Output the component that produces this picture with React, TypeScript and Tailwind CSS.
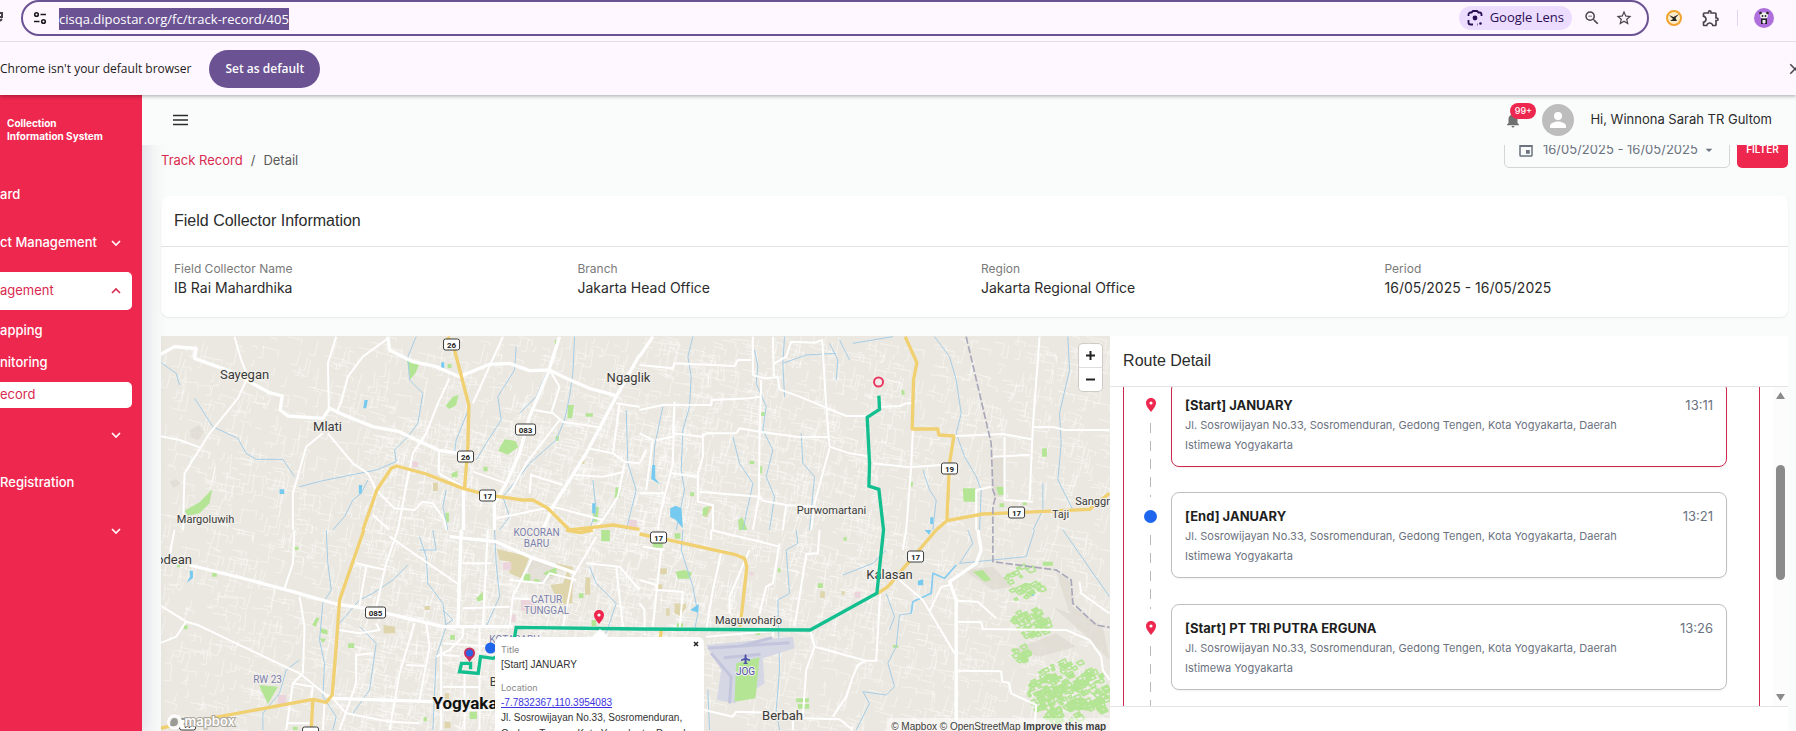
import { useState } from "react";
import {
  MdArrowDropDown,
  MdClose,
  MdEvent,
  MdNotifications,
  MdOutlineExtension,
  MdStarBorder,
  MdZoomOut,
} from "react-icons/md";

interface Stop {
  kind: "start" | "end";
  name: string;
  time: string;
  active?: boolean;
}

const ADDRESS =
  "Jl. Sosrowijayan No.33, Sosromenduran, Gedong Tengen, Kota Yogyakarta, Daerah Istimewa Yogyakarta";

const stops: Stop[] = [
  { kind: "start", name: "[Start] JANUARY", time: "13:11", active: true },
  { kind: "end", name: "[End] JANUARY", time: "13:21" },
  { kind: "start", name: "[Start] PT TRI PUTRA ERGUNA", time: "13:26" },
];

const info = [
  { label: "Field Collector Name", value: "IB Rai Mahardhika" },
  { label: "Branch", value: "Jakarta Head Office" },
  { label: "Region", value: "Jakarta Regional Office" },
  { label: "Period", value: "16/05/2025 - 16/05/2025" },
];

/* ---------- map data ---------- */

// Small seeded generator so the side streets are the same on every render
function createRandom(seed: number) {
  let s = seed;
  return () => {
    s = (s * 1664525 + 1013904223) % 4294967296;
    return s / 4294967296;
  };
}

function buildStreets(count: number, x: number, y: number, w: number, h: number, seed: number) {
  const rnd = createRandom(seed);
  let d = "";
  for (let i = 0; i < count; i++) {
    const px = x + rnd() * w;
    const py = y + rnd() * h;
    const len = 12 + rnd() * 50;
    const a = 0.2 + (rnd() > 0.5 ? Math.PI / 2 : 0) + (rnd() - 0.5) * 0.25;
    const dx = Math.cos(a) * len;
    const dy = Math.sin(a) * len;
    d += `M${px.toFixed(0)} ${py.toFixed(0)}l${dx.toFixed(0)} ${dy.toFixed(0)}l${(-dy * 0.4).toFixed(0)} ${(dx * 0.4).toFixed(0)}`;
  }
  return d;
}

function buildWoods(count: number, x: number, y: number, w: number, h: number, seed: number) {
  const rnd = createRandom(seed);
  let d = "";
  for (let i = 0; i < count; i++) {
    const a = rnd() * Math.PI * 2;
    const r = Math.sqrt(rnd());
    const px = x + w / 2 + (Math.cos(a) * r * w) / 2;
    const py = y + h / 2 + (Math.sin(a) * r * h) / 2;
    const k = 6 + rnd() * 14;
    d += `M${px.toFixed(0)} ${py.toFixed(0)}l${k.toFixed(0)} ${(-k * 0.5).toFixed(0)}l${(k * 0.4).toFixed(0)} ${(k * 0.7).toFixed(0)}l${(-k * 0.8).toFixed(0)} ${(k * 0.3).toFixed(0)}z`;
  }
  return d;
}

const streets =
  buildStreets(3000, 0, 0, 2850, 1200, 7) +
  buildStreets(1500, 600, 250, 1000, 950, 21) +
  buildStreets(500, 1500, 0, 700, 900, 33);

const woods =
  buildWoods(200, 2600, 975, 235, 190, 5) +
  buildWoods(50, 2545, 815, 110, 90, 9) +
  buildWoods(26, 2500, 690, 150, 100, 11) +
  buildWoods(16, 2550, 930, 60, 50, 13);

const tiles = [
  {
    id: "nw",
    transform: "translate(-3 -18)",
    wide: "M0 75L45 50L110 55L105 85L215 125L260 150L330 188L368 198L362 240L385 258L490 265L510 235L560 258L640 290L720 305L760 325L840 362L915 372M685 20L690 60L760 95L830 110L900 140L990 103L1050 100L1110 122L1170 120L1220 145L1290 175L1375 198M912 470V600M1200 20L1165 130L1110 260L1080 370L1040 460L1005 520V600M1440 75L1370 200L1280 370L1180 530L1150 600",
    thin: "M225 20L245 90L265 140L235 205L150 310L75 430L70 600M0 318L60 330L120 352M530 20L505 100L508 235M490 310L440 350L400 490V600M685 25L610 80L565 140L545 215L530 250M505 310L580 400L625 430L650 480L705 535L765 540L790 515L820 520L855 570L860 600M870 145L835 220L800 310L760 370L740 470L715 600M838 362V430L910 470M1030 20L940 220M1170 120L1200 170L1175 250M1125 240L1180 250L1210 275L1320 292M1285 355L1360 370L1395 395L1440 400M1240 435L1330 440L1395 425M940 425L1040 460M1115 435L1210 465M1115 430L1110 490M1200 270L1100 400L1050 490M1380 220L1360 370M1370 220L1440 230M1010 565L1180 530L1330 570M1395 400L1375 500L1330 570L1300 600M640 555L690 600",
    yellow: "M865 20L885 60L928 225L925 350L915 475M610 600L652 480L695 415L712 408L800 432L910 475L985 495L1090 510L1120 510L1165 535L1230 600L1300 592L1360 585L1440 598",
    river: "M770 20L745 80L750 150L790 190L775 280L745 320L705 360L710 395L650 420L560 438L490 452L420 470M520 600L555 560L580 510L605 490L625 450M0 95L50 130L60 165M105 205L160 290L235 325L260 370L290 388L370 388L405 440M1070 50L1065 120L1015 200L1025 270L980 340L950 390M1165 120L1130 200L1080 250M1245 20L1240 130L1230 200L1215 270L1190 330L1110 400L1080 440L1030 500L1050 560L1020 600M860 480L850 530L865 600M1400 240L1405 400L1430 480L1400 600M1300 450L1310 540L1290 600M930 230L890 330L885 370",
    green: "M742 90L778 105L768 130L752 148zM858 228L880 200L897 195L890 225L870 237zM1016 362L1035 328L1068 333L1076 352L1045 374zM75 542L120 517L158 478L150 520L120 550L85 557zM1225 225h18l-5 40h-14zM1278 250h22v10h-22zM1368 472h12v32h-14zM876 430l18 -8v20h-18zM972 410h12v14h-12zM858 548h10v28h-12zM1300 530h18l-4 45h-14zM864 102h12v12h-12zM1186 30h9v12h-9zM1188 318h10v14h-10z",
    water: "M615 210h10l-5 25h-9zM360 478h14v14h-14zM598 465h10l-2 26h-8zM845 97h9v18h-9zM1298 520h9v30h-9z",
    khaki: "M820 458h15v25h-15zM1265 390h10v12h-10z",
    pink: "M758 392l18 4v16h-18zM1408 570h24v22h-24z",
    shade: "M90 300l30 -15l15 20l-20 25l-20 -8zM30 455l20 -8l12 14l-20 14z",
  },
  {
    id: "ne",
    transform: "translate(1437 -18)",
    wide: "M0 80L40 20",
    thin: "M0 105L100 115L105 100L285 108L295 90H335M340 20V135L375 145L415 142L420 178L480 200L620 258H680M400 20L403 140M405 100L440 80L455 35L525 38L548 30L560 230L570 350L630 370L685 378M365 150L360 320L358 500L340 600M0 240L70 225H215L218 210L330 205L360 200M105 215L100 310L190 320L200 310H290L300 295L360 305L470 320L570 322M105 215L100 400L60 560L55 600M190 310V380L175 430V515L220 525V600M95 430L175 440M0 490H80M180 485L360 500L370 512L440 525L530 530M440 525L430 600M570 355L525 520L515 600M725 230L780 228L800 220H820M820 300L815 410L800 600M700 400L810 412L905 405M945 318L1090 312L1175 328M1200 20L1180 290L1170 510M1180 290L1245 292L1275 300H1410M1095 320V510L1180 515M1060 380L1170 375M1055 470L1010 480V600M0 310L40 330L20 480M50 330L100 320M0 400L20 360",
    yellow: "M797 20L832 98L822 150L818 297H895L898 315L943 318L930 400L922 572L890 600M922 572L1030 552L1130 548L1350 538L1410 490",
    river: "M160 20L145 80L155 140L150 230L130 300L125 420L135 480L110 600M345 60L355 110L350 160L380 230L370 300L400 360L380 440L405 500L390 600M435 20L430 100L500 75L590 70M430 100L435 200M570 40L595 90L590 150M600 30L630 90M640 40L700 30L760 20M885 20L930 80L950 150L965 250L950 310L975 380L1010 440L1025 480L1020 600M280 320L300 400L340 460L310 600M485 310L490 400L525 440L510 600M1285 20L1290 120L1260 250L1265 340L1255 450L1300 540M850 420L870 480L890 510L880 600M1210 460V540L1180 600M70 230L45 350L40 440",
    green: "M970 475h38v40h-36zM1070 470h22l6 25h-22zM1208 355h14v25h-14zM296 570l12 -8l16 38h-26zM190 535l18 -8l-5 28l-14 4zM152 487h12v12h-12zM356 408h12v22h-12zM364 246h12v12h-12zM785 178l10 5v12h-8zM330 392h14v10h-14zM1080 520h14v12h-14zM1150 515h12v10h-12zM814 456h6v14h-6z",
    water: "M92 535l16 -8l18 8l4 60l-22 -26l-16 -8zM38 405h9v40l14 18l-26 -16zM872 562h9v20h-9z",
    khaki: "M210 527l8 4l-16 30h-8z",
    pink: "M0 570",
    shade: "M1060 380h36v120h-36z",
  },
  {
    id: "sw",
    transform: "translate(-3 582)",
    wide: "M90 105L270 150L400 185L530 222L620 235L850 290H1060M500 495L520 505L820 515M905 0L895 290M870 20L1010 35L1110 80L1250 130",
    thin: "M45 0L35 50L30 90M405 0L400 100L375 175M420 200L435 290L430 430M430 430L400 460L380 600M0 225L80 275L115 285L250 350L420 430L500 495M0 340L50 320L80 275M715 0L680 100L650 230M600 225L620 110M590 100L680 120M690 20L900 165M985 0L970 290M910 100H995M1120 80L1060 200L1050 290M1310 20L1240 140L1210 290M910 235L1050 230M765 280L720 430L690 600M800 280L810 350L780 510M590 370V460L540 600M740 405L800 408M590 375L640 370M830 380L870 360L910 320V290M850 340L1000 350M850 375L900 378M960 290V600M850 470L960 472M915 430V600M850 540H1000M845 350V600M495 520L490 600M380 580H450M540 300L600 310L660 300L650 280M1050 150L1150 160L1170 130L1250 150M1060 205L1150 210L1160 260M1280 100L1380 110L1440 180M1370 110L1390 290M520 505L560 550L690 575L780 580M460 470L455 510M400 460L460 470",
    yellow: "M613 0L540 210L530 350L518 495L500 517L460 508L180 560L0 595M460 508L455 600M1220 0L1260 8L1300 0",
    river: "M500 0L505 100L515 180L490 220L480 330L495 400L490 500L530 560L520 600M745 105L700 150L640 190L600 210L540 280M780 20L800 80L805 160L850 220L860 290L830 380L820 600M600 290L650 340L630 480L580 550M1005 0L1010 100L1020 200L980 290M1290 110L1310 160L1370 220L1340 310M420 390L380 420L360 490L310 550L310 600M820 0L830 60L780 60M850 240L880 270L850 290",
    green: "M298 465L355 470L325 522zM484 295l20 5v14l-20 -6zM480 325l20 2l-10 12zM458 285l12 -22h10l-12 28zM1150 130L1190 112L1192 135L1165 138zM1092 132h20v24h-20zM1122 148h18v10h-18zM950 205l20 -20v25l-15 5zM1258 190h14v14h-14zM930 545h22v22h-22zM1296 270h14v18h-14zM566 340h18v14h-18zM872 315h14v14h-14zM405 50h12v10h-12zM158 128h14v12h-14zM72 286h12v12h-12zM792 562h10v12h-10zM1325 0h26v34h-26zM52 104h10v8h-10zM400 590h14v10h-14z",
    water: "M90 122h10v22l-18 14l10 -20z",
    khaki: "M1012 57L1110 80L1085 145L1050 130V95L1020 90zM1172 165L1210 160L1225 115L1240 160L1238 220L1200 224zM1190 100L1240 110V130L1190 118zM672 285l35 5v20h-35zM795 228h16v12h-16zM1278 140l14 4v50h-16zM855 490h14v22h-14zM855 575h18v20h-18z",
    pink: "M1030 97h25v22h-25zM1085 210h40v32h-40zM355 495h25v26h-25zM1048 255h20v20h-20z",
    shade: "M1112 90L1195 105L1190 140L1140 165L1100 150z",
  },
  {
    id: "se",
    transform: "translate(1437 582)",
    wide: "M1015 0L1025 60L1010 100L930 155L950 210V600",
    thin: "M0 150L50 165V180L130 185L120 300M65 60L40 290M10 50L75 60M245 70L220 180L200 300M330 60L270 200V250M420 40L400 160L380 170L360 250M215 0V30M215 0L340 30L420 50M540 0L535 70L500 72L480 200L465 290M512 300L525 350L680 392L710 392L722 190M525 350L500 420L490 560M680 392L655 405L640 440L620 500L580 560M195 540L280 560L290 545L470 550M490 565L600 568L640 600M780 150L850 210L945 370M950 212L1015 215L1070 265M950 275L1025 277L1030 297L1280 300L1350 330L1385 380L1390 420L1410 450M950 422L1085 424L1088 455L1108 458L1115 490L1190 525L1185 600M930 165L905 170L870 245M1320 155L1325 190L1410 250M800 0L790 60M200 320L440 300M400 300V320M460 560V600M0 220L15 240V300",
    yellow: "M0 12L80 28L290 75L315 85L322 110L302 290M65 300L62 330M890 0L745 170L715 190",
    river: "M950 105L915 145L880 130L875 190L820 215L815 250L780 255L770 350L745 400L765 470L740 495L670 485L690 520L650 600M610 135L700 100L740 60M1185 0L1160 80L960 100M130 0L125 60L160 170L175 250L165 300M470 0L475 40L440 60L450 190L415 210L420 420L410 540L420 600M740 190L765 260L750 300M205 480L210 600M985 0L1000 40L960 100M1270 0L1410 200",
    green: "M108 125L135 120L158 128L150 146H115zM470 505h38v12h-38zM475 522h34v14h-34zM535 160h15v14h-15zM348 305h14v10h-14zM415 115h8v12h-8zM40 35h30v18h-30zM105 10h18v16h-18zM612 22h10v10h-10zM1210 95h30v12h-30zM1000 125l30 -5l25 30l-20 5zM760 345h16v8h-16zM112 280h18v12h-18z",
    water: "M152 240L178 222L176 248zM835 152l16 -4v18h-16zM1168 185h16v12h-12zM855 0h20l-6 14z",
    khaki: "M62 115h20v18h-20zM80 235h10v22h-10zM105 220l35 2v12l-20 24l-15 -8zM542 184h14v20h-14zM606 184h10v10h-10zM50 163h18v14h-18z",
    pink: "M645 186h18v18h-18zM330 126h12v10h-12z",
    shade: "M1250 125L1295 155L1300 230L1390 290L1410 390L1330 310L1240 230L1290 250zM1120 360L1250 310L1310 350L1200 380zM970 120L1060 110L1120 170L1060 180z",
  },
];

const places = [
  { name: "Sayegan", x: 84, y: 43, size: 13 },
  { name: "Mlati", x: 167, y: 95, size: 13 },
  { name: "Ngaglik", x: 468, y: 46, size: 13 },
  { name: "Margoluwih", x: 45, y: 187, size: 11 },
  { name: "Godean", x: 9, y: 228, size: 13 },
  { name: "Purwomartani", x: 671, y: 178, size: 11 },
  { name: "Taji", x: 900, y: 182, size: 11 },
  { name: "Sanggrahan", x: 944, y: 169, size: 11 },
  { name: "Kalasan", x: 729, y: 243, size: 13 },
  { name: "Maguwoharjo", x: 588, y: 288, size: 11 },
  { name: "Berbah", x: 622, y: 384, size: 13 },
];

const districts = [
  { name: "KOCORAN", x: 376, y: 200 },
  { name: "BARU", x: 376, y: 211 },
  { name: "CATUR", x: 386, y: 267 },
  { name: "TUNGGAL", x: 386, y: 278 },
  { name: "RW 23", x: 107, y: 347 },
  { name: "KOTABARU", x: 354, y: 307 },
];

const shields = [
  { n: "26", x: 291, y: 8 },
  { n: "26", x: 305, y: 120 },
  { n: "083", x: 365, y: 93 },
  { n: "17", x: 327, y: 159 },
  { n: "19", x: 789, y: 132 },
  { n: "17", x: 856, y: 176 },
  { n: "085", x: 215, y: 276 },
  { n: "17", x: 498, y: 201 },
  { n: "17", x: 755, y: 220 },
  { n: "17", x: 27, y: 388 },
  { n: "01", x: 150, y: 396 },
];

/* ---------- small pieces ---------- */

function Chevron({ up = false }: { up?: boolean }) {
  return (
    <svg className="h-2 w-3" viewBox="0 0 12 8" fill="none" stroke="currentColor" strokeWidth={1.6} aria-hidden="true">
      <path d={up ? "M2 6L6 2L10 6" : "M2 2L6 6L10 2"} />
    </svg>
  );
}

function Pin({ className }: { className?: string }) {
  return (
    <svg className={className} viewBox="0 0 12 16" aria-hidden="true">
      <path d="M6 1C3 1 1 3.200 1 6c0 3.500 5 9 5 9s5-5.500 5-9c0-2.800-2-5-5-5z" fill="#ee274f" />
      <circle cx="6" cy="6" r="1.600" fill="#fff" />
    </svg>
  );
}

/* ---------- browser chrome ---------- */

function BrowserChrome() {
  return (
    <div className="relative z-20 bg-[#fef7ff] font-['Open_Sans',sans-serif] text-[#1d1b20] shadow-[0_1px_4px_rgba(0,0,0,0.35)]">
      <div className="flex h-[42px] items-start border-b border-[#e5dde8]">
        <svg className="mt-3 h-3 w-[21px]" viewBox="0 0 21 12" aria-hidden="true">
          <path d="M0 1H2V5H0M0 9L2 7" stroke="#45404a" strokeWidth="2" fill="none" />
        </svg>
        <div className="flex h-9 flex-1 items-center rounded-full border-2 border-[#6b5293] pr-3 pl-[10px]">
          <svg className="h-[14px] w-[14px]" viewBox="0 0 14 14" fill="none" stroke="#1d1b20" strokeWidth="1.600" aria-hidden="true">
            <circle cx="3.500" cy="3.500" r="1.800" />
            <path d="M7.500 3.500H13M1 10.500H6.500" />
            <circle cx="10.500" cy="10.500" r="1.800" />
          </svg>
          <div className="ml-3 flex-1">
            <span className="inline-block bg-[#6b5293] text-[13px] leading-[22px] text-white">
              cisqa.dipostar.org/fc/track-record/405
            </span>
          </div>
          <button
            type="button"
            className="flex h-6 items-center gap-[7px] rounded-full bg-[#ecdcff] px-2 text-[13px] font-medium text-[#2a0f55]"
          >
            <svg className="h-4 w-4" viewBox="0 0 16 16" fill="none" stroke="currentColor" strokeWidth="1.800" aria-hidden="true">
              <path d="M1.500 6V4.500A2 2 0 0 1 3.500 2.500H4.500L6 1H10L11.500 2.500H12.500A2 2 0 0 1 14.500 4.500V6M1.500 10V12.500A2 2 0 0 0 3.500 14.500H6M10 14.500H10.500" />
              <circle cx="8" cy="8" r="2.400" fill="currentColor" stroke="none" />
              <circle cx="13.500" cy="13.500" r="1.300" fill="currentColor" stroke="none" />
            </svg>
            Google Lens
          </button>
          <button type="button" aria-label="Zoom" className="ml-[11px]">
            <MdZoomOut className="h-[18px] w-[18px] text-[#48434d]" />
          </button>
          <button type="button" aria-label="Bookmark this page" className="ml-[14px]">
            <MdStarBorder className="h-[18px] w-[18px] text-[#48434d]" />
          </button>
          <span className="w-[2px]" />
        </div>
        <div className="flex h-9 items-center pl-[17px]">
          <svg className="h-4 w-4" viewBox="0 0 16 16" aria-hidden="true">
            <circle cx="8" cy="8" r="7" fill="#fdeecb" stroke="#f2a32c" strokeWidth="2" />
            <path d="M3 5L7 9L4 11L11 11L9.500 8L13 4L7.500 7z" fill="#2d2a26" />
          </svg>
          <MdOutlineExtension className="ml-[19px] h-5 w-5 text-[#48434d]" />
          <div className="ml-4 h-4 w-px bg-[#e3d3f5]" />
          <svg className="mr-[22px] ml-4 h-5 w-5" viewBox="0 0 20 20" aria-hidden="true">
            <circle cx="10" cy="10" r="10" fill="#ae6fdc" />
            <ellipse cx="10" cy="7.500" rx="4" ry="3.200" fill="#eee" />
            <circle cx="6.500" cy="5" r="1.300" fill="#222" />
            <circle cx="13.500" cy="5" r="1.300" fill="#222" />
            <circle cx="8.500" cy="8" r="0.900" fill="#222" />
            <circle cx="11.500" cy="8" r="0.900" fill="#222" />
            <path d="M7 10.500H13V16H11V14H9V16H7z" fill="#222" />
            <rect x="8.500" y="12" width="3" height="3" fill="#eee" />
          </svg>
        </div>
      </div>
      <div className="flex h-[53px] items-center overflow-hidden">
        <span className="text-[12px] whitespace-nowrap">Chrome isn't your default browser</span>
        <button
          type="button"
          className="ml-[18px] h-[38px] rounded-full bg-[#6b5293] px-4 text-[12px] font-semibold text-white"
        >
          Set as default
        </button>
        <button type="button" aria-label="Close" className="-mr-2 ml-auto">
          <MdClose className="h-[18px] w-[18px] text-[#48434d]" />
        </button>
      </div>
    </div>
  );
}

/* ---------- sidebar ---------- */

function Sidebar() {
  const row = "flex h-[38px] w-full items-center justify-between pr-[10px] text-[13px] font-medium text-white";
  const sub = "flex h-[26px] items-center text-[13px] font-medium text-white";

  return (
    <aside className="relative z-10 w-[142px] shrink-0 overflow-hidden bg-[#ee274f] pr-[10px] shadow-[0_0_20px_4px_rgba(70,80,110,0.18)]">
      <div className="pt-[22px] pl-[7px] text-[10px] leading-[13px] font-bold text-white">
        Collection
        <br />
        Information System
      </div>
      <nav className="mt-[33px] flex flex-col whitespace-nowrap">
        <a href="#dashboard" className={row}>
          ard
        </a>
        <button type="button" className={`${row} mt-[10px]`}>
          ct Management
          <Chevron />
        </button>
        <button
          type="button"
          className="mt-[10px] flex h-[38px] w-full items-center justify-between rounded-r-[5px] bg-white pr-[10px] text-[13px] text-[#d92a50]"
        >
          agement
          <Chevron up />
        </button>
        <div className="my-2 flex flex-col gap-[6px]">
          <a href="#mapping" className={sub}>
            apping
          </a>
          <a href="#monitoring" className={sub}>
            nitoring
          </a>
          <a href="#record" className="flex h-[26px] items-center rounded-r-[5px] bg-white text-[13px] text-[#d92a50]">
            ecord
          </a>
        </div>
        <button type="button" aria-label="Expand" className={row}>
          <span />
          <Chevron />
        </button>
        <a href="#registration" className={`${row} mt-[10px]`}>
          Registration
        </a>
        <button type="button" aria-label="Expand" className={`${row} mt-[10px]`}>
          <span />
          <Chevron />
        </button>
      </nav>
    </aside>
  );
}

/* ---------- header ---------- */

function TopBar() {
  return (
    <header className="relative z-10 flex h-[50px] shrink-0 items-center justify-between bg-[#fafcfb] pr-[24px] pl-[31px]">
      <button type="button" aria-label="Toggle menu">
        <svg className="h-4 w-[15px]" viewBox="0 0 15 16" stroke="#2b2b2b" strokeWidth="1.500" aria-hidden="true">
          <path d="M0 3.500H15M0 8H15M0 12.500H15" />
        </svg>
      </button>
      <div className="flex items-center">
        <button type="button" aria-label="Notifications" className="relative">
          <MdNotifications className="h-[18px] w-[18px] text-[#6f6f6f]" />
          <span className="absolute -top-2 left-[6px] flex h-4 w-[26px] items-center justify-center rounded-full bg-[#ee274f] text-[9px] font-medium text-white">
            99+
          </span>
        </button>
        <svg className="ml-5 h-8 w-8" viewBox="0 0 32 32" aria-hidden="true">
          <circle cx="16" cy="16" r="16" fill="#bdbdbd" />
          <circle cx="16" cy="12" r="4" fill="#fff" />
          <path d="M8 24V22C8 19 13 17.500 16 17.500S24 19 24 22V24z" fill="#fff" />
        </svg>
        <span className="ml-4 text-[13px] text-[#2b2b2b]">Hi, Winnona Sarah TR Gultom</span>
      </div>
    </header>
  );
}

/* ---------- map ---------- */

function RouteMap() {
  const [popupOpen, setPopupOpen] = useState(true);

  return (
    <div className="relative col-span-7 h-[400px] overflow-hidden bg-[#ebe8e1]">
      <svg className="block h-full w-full" viewBox="0 0 950 400" preserveAspectRatio="xMidYMin slice">
        <g transform="scale(0.33333)" fill="none" strokeLinejoin="round">
          <path d={streets} stroke="#fff" strokeWidth="1.800" opacity="0.750" />
          {tiles.map((t) => (
            <g key={t.id} transform={t.transform}>
              <path d={t.shade} fill="#dedad1" opacity="0.700" />
              <path d={t.khaki} fill="#dfd5ac" />
              <path d={t.pink} fill="#ecd4dd" />
              <path d={t.green} fill="#b4e595" />
              <path d={t.river} stroke="#a5cde6" strokeWidth="3" />
              <path d={t.water} fill="#76caef" />
            </g>
          ))}
          <path d={woods} stroke="#b4e595" strokeWidth="5" />
          <path d="M2387 687L2352 727L2317 712L2312 772L2257 797L2252 832" stroke="#86cdf0" strokeWidth="5" />
          <path d="M1637 927L1897 902L1902 937L1807 967L1812 1042L1722 1102L1669 1092L1682 1002z" fill="#d6d7e5" />
          <path d="M1642 937L1887 920M1652 952L1712 1022L1707 1102M1690 965L1800 955M1735 932L1835 905" stroke="#c3c5dc" strokeWidth="9" />
          <path d="M1727 982L1797 964L1785 1087L1722 1097z" fill="#b4e595" />
          {tiles.map((t) => (
            <g key={t.id} transform={t.transform}>
              <path d={t.thin} stroke="#fff" strokeWidth="6" />
              <path d={t.wide} stroke="#fff" strokeWidth="10" />
              <path d={t.yellow} stroke="#f0d070" strokeWidth="10" />
            </g>
          ))}
          <path
            d="M2417 2L2492 322L2497 462L2505 482L2497 512V677L2687 702L2732 732L2737 802L2807 867L2847 874"
            stroke="#a8a8ba"
            strokeWidth="5"
            strokeDasharray="22 7"
          />
        </g>

        {/* road shields */}
        {shields.map((s, i) => {
          const w = s.n.length > 2 ? 20 : 16;
          return (
            <g key={i}>
              <rect x={s.x - w / 2} y={s.y - 5} width={w} height={11} rx={2} fill="#fff" stroke="#3b3b3b" />
              <text x={s.x} y={s.y + 4} textAnchor="middle" fontSize={8} fontWeight={700} fill="#222" fontFamily="Roboto, sans-serif">
                {s.n}
              </text>
            </g>
          );
        })}

        {/* labels */}
        <g fontFamily="Roboto, sans-serif" textAnchor="middle" fill="#3a3a3a" stroke="#f3f1ec" strokeWidth={2} paintOrder="stroke">
          {places.map((p) => (
            <text key={p.name} x={p.x} y={p.y} fontSize={p.size}>
              {p.name}
            </text>
          ))}
          {districts.map((p) => (
            <text key={p.name} x={p.x} y={p.y} fontSize={10} fill="#7b80ab">
              {p.name}
            </text>
          ))}
          <text x={333} y={350} fontSize={12}>
            B
          </text>
          <text x={272} y={373} fontSize={17} fontWeight={700} textAnchor="start" fill="#111">
            Yogyakarta
          </text>
          <text x={585} y={339} fontSize={10} fill="#4c52a8">
            JOG
          </text>
        </g>
        <path
          d="M585 318L586 319.500V322L589.500 323.500V325L586 324V326.500L587.500 328H582.500L584 326.500V324L580.500 325V323.500L584 322V319.500z"
          fill="#4c52a8"
        />

        {/* travelled route */}
        <path
          d="M2155 179L2157 220L2120 244L2127 382L2125 450L2155 460L2169 582L2149 772L1949 882L1437 879L1067 874L1062 905L1045 950L997 967L960 962L953 1012L897 1007L903 982H930V1000"
          transform="scale(0.33333)"
          fill="none"
          stroke="#13bf8f"
          strokeWidth="10"
        />
        <circle cx={718} cy={46} r={4.500} fill="#f3eaea" stroke="#e93a61" strokeWidth={2} />
        <circle cx={330} cy={312} r={5.500} fill="#2165ea" />
        <path d="M309 326L304 319L314 319z" fill="#c8315f" />
        <circle cx={309} cy={317} r={4.500} fill="#2a62e8" stroke="#c8315f" strokeWidth={2} />

        {/* mapbox mark */}
        <circle cx={14} cy={386} r={6.500} fill="#f4f2ee" stroke="#fff" strokeWidth={2} />
        <path d="M10 390C9 385 11 382 14 382S18 385 17 388S12 390 10 390z" fill="#9c9a95" />
        <text x={24} y={390} fontSize={13} fontWeight={600} fontFamily="Inter, sans-serif" fill="#fff" stroke="#aaa69e" strokeWidth={2} paintOrder="stroke">
          mapbox
        </text>
      </svg>

      <div className="absolute top-2 right-2 flex w-[23px] flex-col divide-y divide-[#ddd] rounded bg-white shadow-[0_0_0_1px_rgba(0,0,0,0.12)]">
        <button type="button" aria-label="Zoom in" className="flex h-6 items-center justify-center">
          <svg className="h-[9px] w-[9px]" viewBox="0 0 9 9" stroke="#222" strokeWidth="2" aria-hidden="true">
            <path d="M0 4.500H9M4.500 0V9" />
          </svg>
        </button>
        <button type="button" aria-label="Zoom out" className="flex h-[23px] items-center justify-center">
          <svg className="h-[9px] w-[9px]" viewBox="0 0 9 9" stroke="#222" strokeWidth="2" aria-hidden="true">
            <path d="M0 4.500H9" />
          </svg>
        </button>
      </div>

      <Pin className="absolute top-[273px] left-[432px] h-4 w-3" />

      {popupOpen && (
        <div className="absolute top-[293px] left-[334px] w-[209px] font-['Liberation_Sans',Arial,sans-serif] text-[10px] text-[#333]">
          <svg className="mx-auto block h-2 w-4" viewBox="0 0 16 8" aria-hidden="true">
            <path d="M8 0L16 8H0z" fill="#fff" />
          </svg>
          <div className="relative rounded-[6px] bg-white px-[6px] pt-[6px] pb-3">
            <button
              type="button"
              aria-label="Close popup"
              onClick={() => setPopupOpen(false)}
              className="absolute top-1 right-[5px]"
            >
              <svg className="h-[6px] w-[6px]" viewBox="0 0 6 6" stroke="#222" strokeWidth="1.500" aria-hidden="true">
                <path d="M1 1L5 5M5 1L1 5" />
              </svg>
            </button>
            <p className="font-[Inter,sans-serif] text-[9px] leading-[14px] text-[#888]">Title</p>
            <p className="leading-4">[Start] JANUARY</p>
            <p className="mt-2 font-[Inter,sans-serif] text-[9px] leading-[14px] text-[#888]">Location</p>
            <a href="#location" className="block leading-[15px] text-[#3b34e0] underline">
              -7.7832367,110.3954083
            </a>
            <p className="leading-4">
              Jl. Sosrowijayan No.33, Sosromenduran, Gedong Tengen, Kota Yogyakarta, Daerah
            </p>
          </div>
        </div>
      )}

      <div className="absolute right-0 bottom-0 bg-white/50 px-1 font-['Liberation_Sans',Arial,sans-serif] text-[10px] leading-[18px] text-[#404040]">
        <a href="#mapbox">© Mapbox</a> <a href="#osm">© OpenStreetMap</a>{" "}
        <a href="#improve" className="font-bold">
          Improve this map
        </a>
      </div>
    </div>
  );
}

/* ---------- route list ---------- */

function StopRow({ stop }: { stop: Stop }) {
  return (
    <li className="flex pb-[25px] pl-[6px]">
      <div className="-mb-[30px] flex w-[41px] shrink-0 flex-col items-center pt-4">
        {stop.kind === "start" ? (
          <Pin className="h-4 w-3 shrink-0" />
        ) : (
          <span className="my-[2px] h-[13px] w-[13px] shrink-0 rounded-full bg-[#1f66ee]" />
        )}
        <svg className="mt-[10px] w-px flex-1" height="74" aria-hidden="true">
          <line x1="0.500" x2="0.500" y1="0" y2="74" stroke="#b8b8b8" strokeDasharray="10 8" />
        </svg>
      </div>
      <div
        className={`h-[86px] flex-1 rounded-[8px] border px-[13px] pt-[13px] shadow-[0_1px_2px_rgba(0,0,0,0.06)] ${
          stop.active ? "border-[#d0294f]" : "border-[#bfbfbf]"
        }`}
      >
        <div className="flex justify-between leading-5">
          <h3 className="text-[13px] font-bold text-[#1f1f1f]">{stop.name}</h3>
          <span className="text-[13px] text-[#6b7280]">{stop.time}</span>
        </div>
        <p className="max-w-[470px] text-[11px] leading-5 text-[#6b7280]">{ADDRESS}</p>
      </div>
    </li>
  );
}

function RouteDetail() {
  return (
    <section className="col-span-5 flex h-[400px] flex-col bg-white">
      <h2 className="flex h-[51px] shrink-0 items-center border-b border-[#e4e4e4] pl-[13px] font-['Liberation_Sans',Arial,sans-serif] text-[16px] text-[#2b2b2b]">
        Route Detail
      </h2>
      <div className="flex min-h-0 flex-1 overflow-hidden pl-[13px]">
        <div className="mr-[13px] h-full flex-1 overflow-hidden border-x border-[#d0294f] pr-8">
          <ul className="-mt-[6px]">
            {stops.map((stop) => (
              <StopRow key={stop.name} stop={stop} />
            ))}
          </ul>
        </div>
        <div className="flex w-[15px] flex-col items-center bg-[#fcfcfc] py-1">
          <svg className="mt-[1px] h-[7px] w-[9px]" viewBox="0 0 9 7" aria-hidden="true">
            <path d="M4.500 0L9 7H0z" fill="#8b8b8b" />
          </svg>
          <div className="mt-[66px] h-[115px] w-[9px] rounded-full bg-[#8b8b8b]" />
          <svg className="mt-auto mb-[1px] h-[7px] w-[9px]" viewBox="0 0 9 7" aria-hidden="true">
            <path d="M0 0H9L4.500 7z" fill="#8b8b8b" />
          </svg>
        </div>
      </div>
      <div className="h-[30px] shrink-0 border-t border-[#e4e4e4]" />
    </section>
  );
}

/* ---------- page ---------- */

export default function App() {
  return (
    <div className="flex h-screen flex-col overflow-hidden bg-[#fafcfb] font-[Inter,sans-serif]">
      <BrowserChrome />
      <div className="flex min-h-0 flex-1">
        <Sidebar />
        <div className="flex min-w-0 flex-1 flex-col">
          <TopBar />
          <main className="min-h-0 flex-1 overflow-hidden pr-2 pl-[19px]">
            <div className="-mt-[14px] flex items-end justify-between">
              <nav aria-label="Breadcrumb" className="flex gap-2 text-[13px] leading-4 text-[#5a5a5a]">
                <a href="#track-record" className="text-[#d92a50]">
                  Track Record
                </a>
                <span>/</span>
                <span>Detail</span>
              </nav>
              <div className="flex gap-[7px]">
                <label className="flex h-[37px] w-[226px] items-center rounded-[5px] border border-[#d3d5d8] pr-3 pl-3 text-[#6b7280]">
                  <MdEvent className="h-[18px] w-[18px] shrink-0" aria-hidden="true" />
                  <input
                    aria-label="Period"
                    readOnly
                    value="16/05/2025 - 16/05/2025"
                    className="ml-2 min-w-0 flex-1 bg-transparent text-[13px] outline-none"
                  />
                  <MdArrowDropDown className="h-4 w-4 shrink-0" aria-hidden="true" />
                </label>
                <button
                  type="button"
                  className="h-[37px] w-[51px] rounded-[5px] bg-[#ee274f] text-[10px] font-semibold text-white"
                >
                  FILTER
                </button>
              </div>
            </div>

            <section className="mt-7 rounded-[8px] bg-white shadow-[0_1px_2px_rgba(0,0,0,0.08)]">
              <h2 className="flex h-[51px] items-center border-b border-[#e4e4e4] pl-[13px] font-['Liberation_Sans',Arial,sans-serif] text-[16px] text-[#2b2b2b]">
                Field Collector Information
              </h2>
              <dl className="grid grid-cols-4 pt-[13px] pb-[19px] pl-[13px]">
                {info.map((item) => (
                  <div key={item.label}>
                    <dt className="text-[12px] leading-[18px] text-[#7a7a7a]">{item.label}</dt>
                    <dd className="text-[14px] leading-5 text-[#2b2b2b]">{item.value}</dd>
                  </div>
                ))}
              </dl>
            </section>

            <div className="mt-[19px] grid grid-cols-12">
              <RouteMap />
              <RouteDetail />
            </div>
          </main>
        </div>
      </div>
    </div>
  );
}
